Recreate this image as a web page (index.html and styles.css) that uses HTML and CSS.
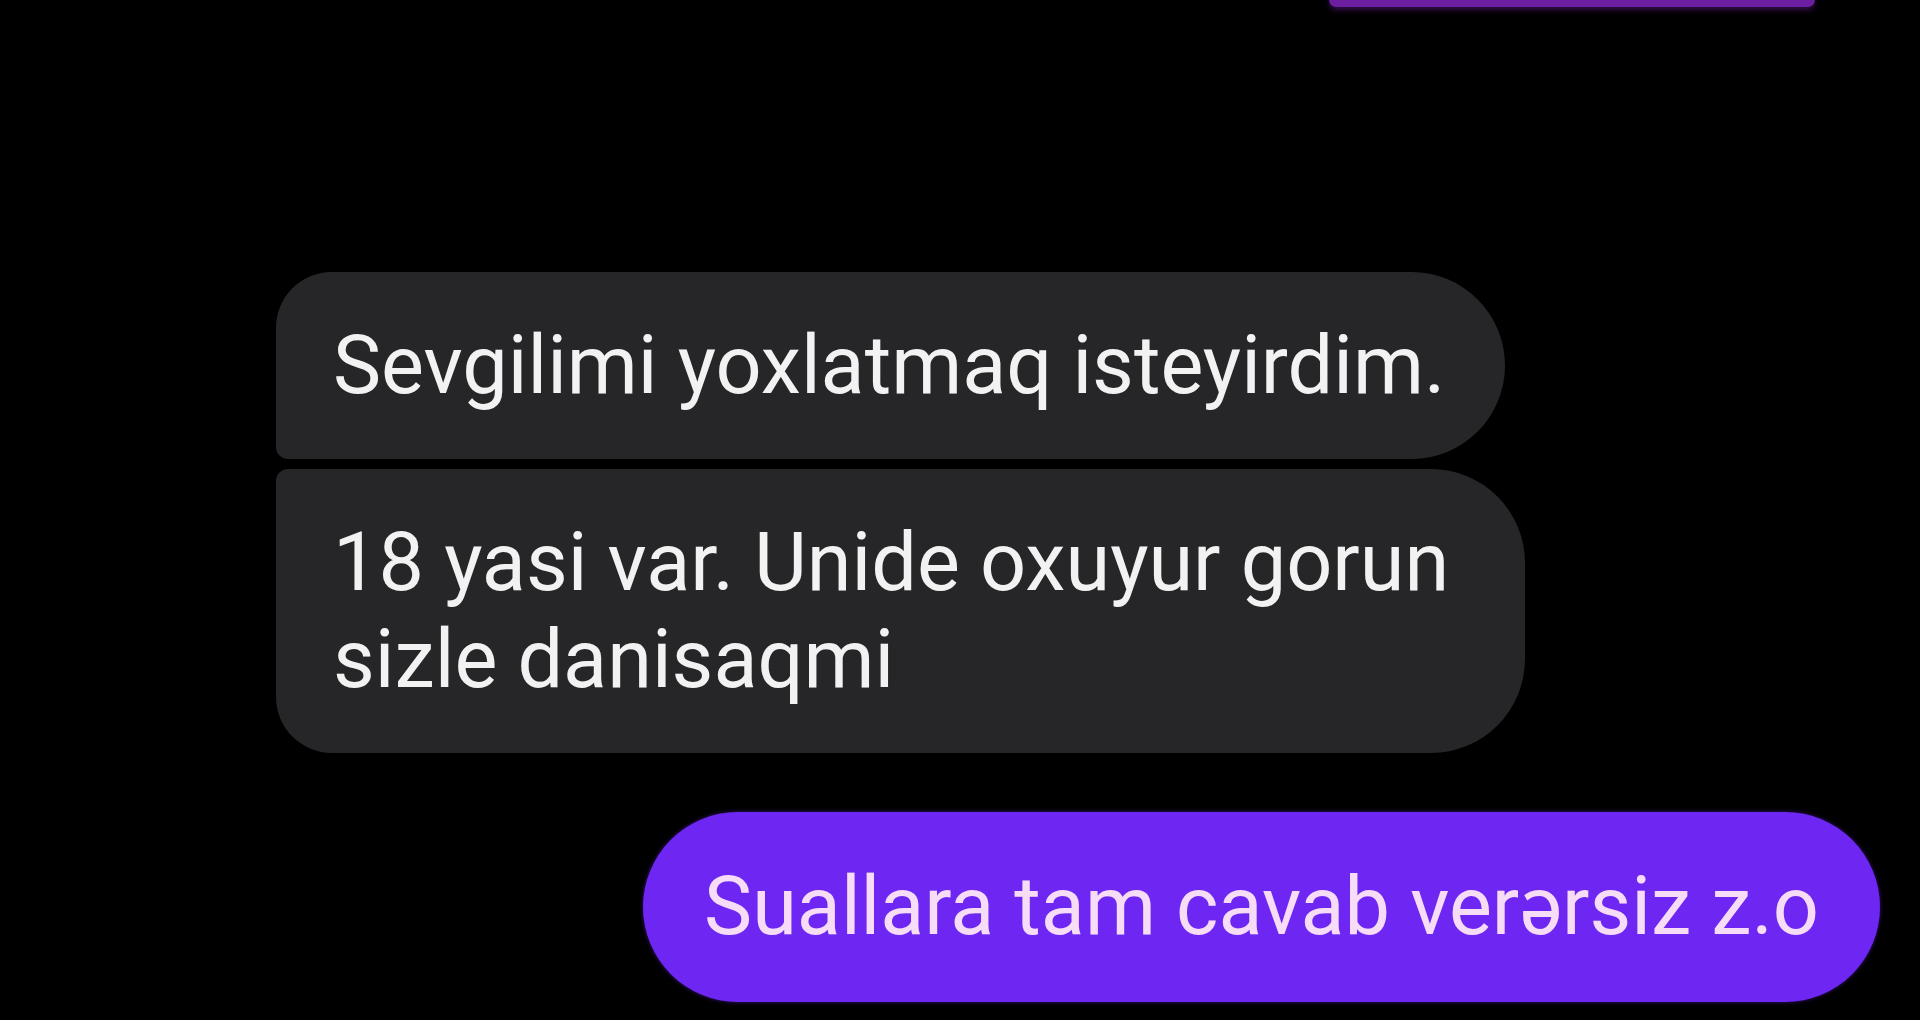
FILE: index.html
```html
<!DOCTYPE html>
<html lang="az">
<head>
<meta charset="utf-8">
<title>Chat</title>
<link rel="stylesheet" href="styles.css">
</head>
<body>
<div class="chat">
  <div class="top-row"><div class="prev-bubble"></div></div>
  <div class="group received">
    <div class="bubble grey first">Sevgilimi yoxlatmaq isteyirdim.</div>
    <div class="bubble grey last">18 yasi var. Unide oxuyur gorun sizle danisaqmi</div>
  </div>
  <div class="group sent">
    <div class="bubble purple">Suallara tam cavab verərsiz z.o</div>
  </div>
</div>
</body>
</html>
```
FILE: styles.css
```css
html, body {
  margin: 0;
  padding: 0;
  background: #000;
  height: 1020px;
  overflow: hidden;
}
.chat {
  display: flex;
  flex-direction: column;
  font-family: Roboto, "Noto Sans", sans-serif;
}
.top-row {
  display: flex;
  justify-content: flex-end;
  padding-right: 105px;
  height: 272px;
}
.prev-bubble {
  width: 486px;
  height: 7px;
  background: #6b1fa0;
  border-radius: 0 0 20px 20px;
  box-shadow: 0 2px 6px rgba(110, 30, 160, 0.6);
}
.group {
  display: flex;
  flex-direction: column;
  gap: 10px;
}
.received {
  align-items: flex-start;
  padding-left: 276px;
}
.sent {
  align-items: flex-end;
  padding-right: 40px;
  margin-top: 59px;
}
.bubble {
  font-size: 81px;
  line-height: 97px;
  letter-spacing: 0;
}
.grey {
  background: #262628;
  color: #f2f2f2;
  padding: 45px 60px 45px 57px;
  max-width: 1132px;
}
.first {
  border-radius: 56px 94px 94px 12px;
}
.last {
  border-radius: 12px 94px 94px 56px;
}
.purple {
  background: #6e27f2;
  color: #f6dcf6;
  padding: 46px 61px 47px 61px;
  border-radius: 95px;
  box-shadow: 0 0 4px rgba(110, 39, 242, 0.5);
}
```
